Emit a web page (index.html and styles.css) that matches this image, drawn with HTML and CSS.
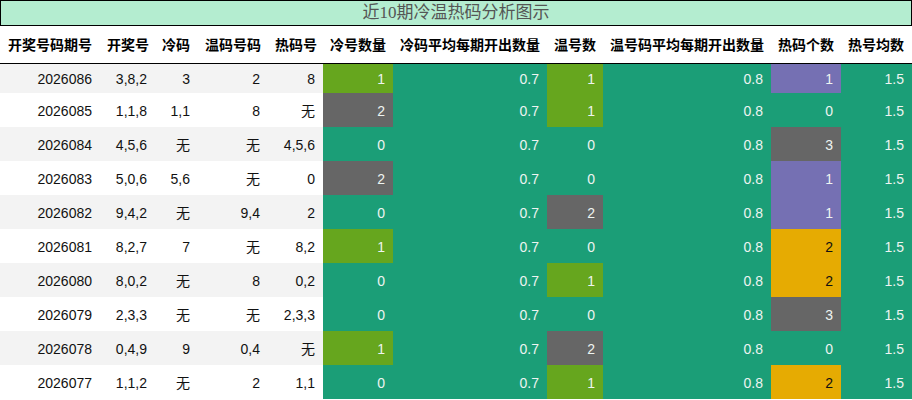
FILE: index.html
```html
<!DOCTYPE html>
<html lang="zh">
<head>
<meta charset="utf-8">
<title>近10期冷温热码分析图示</title>
<link rel="stylesheet" href="styles.css">
</head>
<body>
<div class="page">
  <div class="title">近10期冷温热码分析图示</div>
  <table class="grid">
    <colgroup>
      <col class="w100"><col class="w55"><col class="w43"><col class="w70"><col class="w55">
      <col class="w70"><col class="w154"><col class="w56"><col class="w168"><col class="w70"><col class="w71">
    </colgroup>
    <thead>
      <tr>
        <th>开奖号码期号</th><th>开奖号</th><th>冷码</th><th>温码号码</th><th>热码号</th>
        <th>冷号数量</th><th>冷码平均每期开出数量</th><th>温号数</th><th>温号码平均每期开出数量</th><th>热码个数</th><th>热号均数</th>
      </tr>
    </thead>
    <tbody>
      <tr class="odd first"><td>2026086</td><td>3,8,2</td><td>3</td><td>2</td><td>8</td><td class="c c1">1</td><td class="c">0.7</td><td class="c c1">1</td><td class="c">0.8</td><td class="c h1">1</td><td class="c">1.5</td></tr>
      <tr><td>2026085</td><td>1,1,8</td><td>1,1</td><td>8</td><td>无</td><td class="c c2">2</td><td class="c">0.7</td><td class="c c1">1</td><td class="c">0.8</td><td class="c">0</td><td class="c">1.5</td></tr>
      <tr class="odd"><td>2026084</td><td>4,5,6</td><td>无</td><td>无</td><td>4,5,6</td><td class="c">0</td><td class="c">0.7</td><td class="c">0</td><td class="c">0.8</td><td class="c h3">3</td><td class="c">1.5</td></tr>
      <tr><td>2026083</td><td>5,0,6</td><td>5,6</td><td>无</td><td>0</td><td class="c c2">2</td><td class="c">0.7</td><td class="c">0</td><td class="c">0.8</td><td class="c h1">1</td><td class="c">1.5</td></tr>
      <tr class="odd"><td>2026082</td><td>9,4,2</td><td>无</td><td>9,4</td><td>2</td><td class="c">0</td><td class="c">0.7</td><td class="c c2">2</td><td class="c">0.8</td><td class="c h1">1</td><td class="c">1.5</td></tr>
      <tr><td>2026081</td><td>8,2,7</td><td>7</td><td>无</td><td>8,2</td><td class="c c1">1</td><td class="c">0.7</td><td class="c">0</td><td class="c">0.8</td><td class="c h2">2</td><td class="c">1.5</td></tr>
      <tr class="odd"><td>2026080</td><td>8,0,2</td><td>无</td><td>8</td><td>0,2</td><td class="c">0</td><td class="c">0.7</td><td class="c c1">1</td><td class="c">0.8</td><td class="c h2">2</td><td class="c">1.5</td></tr>
      <tr><td>2026079</td><td>2,3,3</td><td>无</td><td>无</td><td>2,3,3</td><td class="c">0</td><td class="c">0.7</td><td class="c">0</td><td class="c">0.8</td><td class="c h3">3</td><td class="c">1.5</td></tr>
      <tr class="odd"><td>2026078</td><td>0,4,9</td><td>9</td><td>0,4</td><td>无</td><td class="c c1">1</td><td class="c">0.7</td><td class="c c2">2</td><td class="c">0.8</td><td class="c">0</td><td class="c">1.5</td></tr>
      <tr><td>2026077</td><td>1,1,2</td><td>无</td><td>2</td><td>1,1</td><td class="c">0</td><td class="c">0.7</td><td class="c c1">1</td><td class="c">0.8</td><td class="c h2">2</td><td class="c">1.5</td></tr>
    </tbody>
  </table>
</div>
</body>
</html>
```
FILE: styles.css
```css
html, body {
  margin: 0;
  padding: 0;
  background: #fff;
}
.page {
  width: 912px;
}
.title {
  box-sizing: border-box;
  height: 26px;
  border: 1px solid #000;
  background: #b4edd0;
  color: #555;
  font-family: "Liberation Serif", "Noto Sans CJK SC", serif;
  font-size: 17px;
  line-height: 24px;
  text-align: center;
}
.grid {
  width: 912px;
  border-collapse: collapse;
  table-layout: fixed;
  font-family: "Liberation Sans", "Noto Sans CJK SC", sans-serif;
  font-size: 14px;
}
.w100 { width: 100px; }
.w55 { width: 55px; }
.w43 { width: 43px; }
.w70 { width: 70px; }
.w71 { width: 71px; }
.w154 { width: 154px; }
.w56 { width: 56px; }
.w168 { width: 168px; }
.grid th, .grid td {
  padding: 0 8px 0 7px;
  text-align: right;
  white-space: nowrap;
  overflow: hidden;
}
.grid thead tr {
  height: 37px;
  border-bottom: 1px solid #000;
}
.grid th {
  font-weight: bold;
  color: #000;
  padding-top: 2px;
  line-height: 20px;
}
.grid tbody tr {
  height: 34px;
}
.grid tbody tr.first {
  height: 30px;
}
.grid td {
  color: #111;
  line-height: 18px;
  padding-top: 1px;
}
.grid tr.odd td {
  background: #f3f3f3;
}
.grid td.c, .grid tr.odd td.c {
  background: #1b9e77;
  color: #eef4f1;
}
.grid td.c1, .grid tr.odd td.c1 { background: #66a61e; }
.grid td.c2, .grid tr.odd td.c2 { background: #666666; }
.grid td.h1, .grid tr.odd td.h1 { background: #7570b3; }
.grid td.h2, .grid tr.odd td.h2 { background: #e6ab02; color: #111; }
.grid td.h3, .grid tr.odd td.h3 { background: #666666; }
```
